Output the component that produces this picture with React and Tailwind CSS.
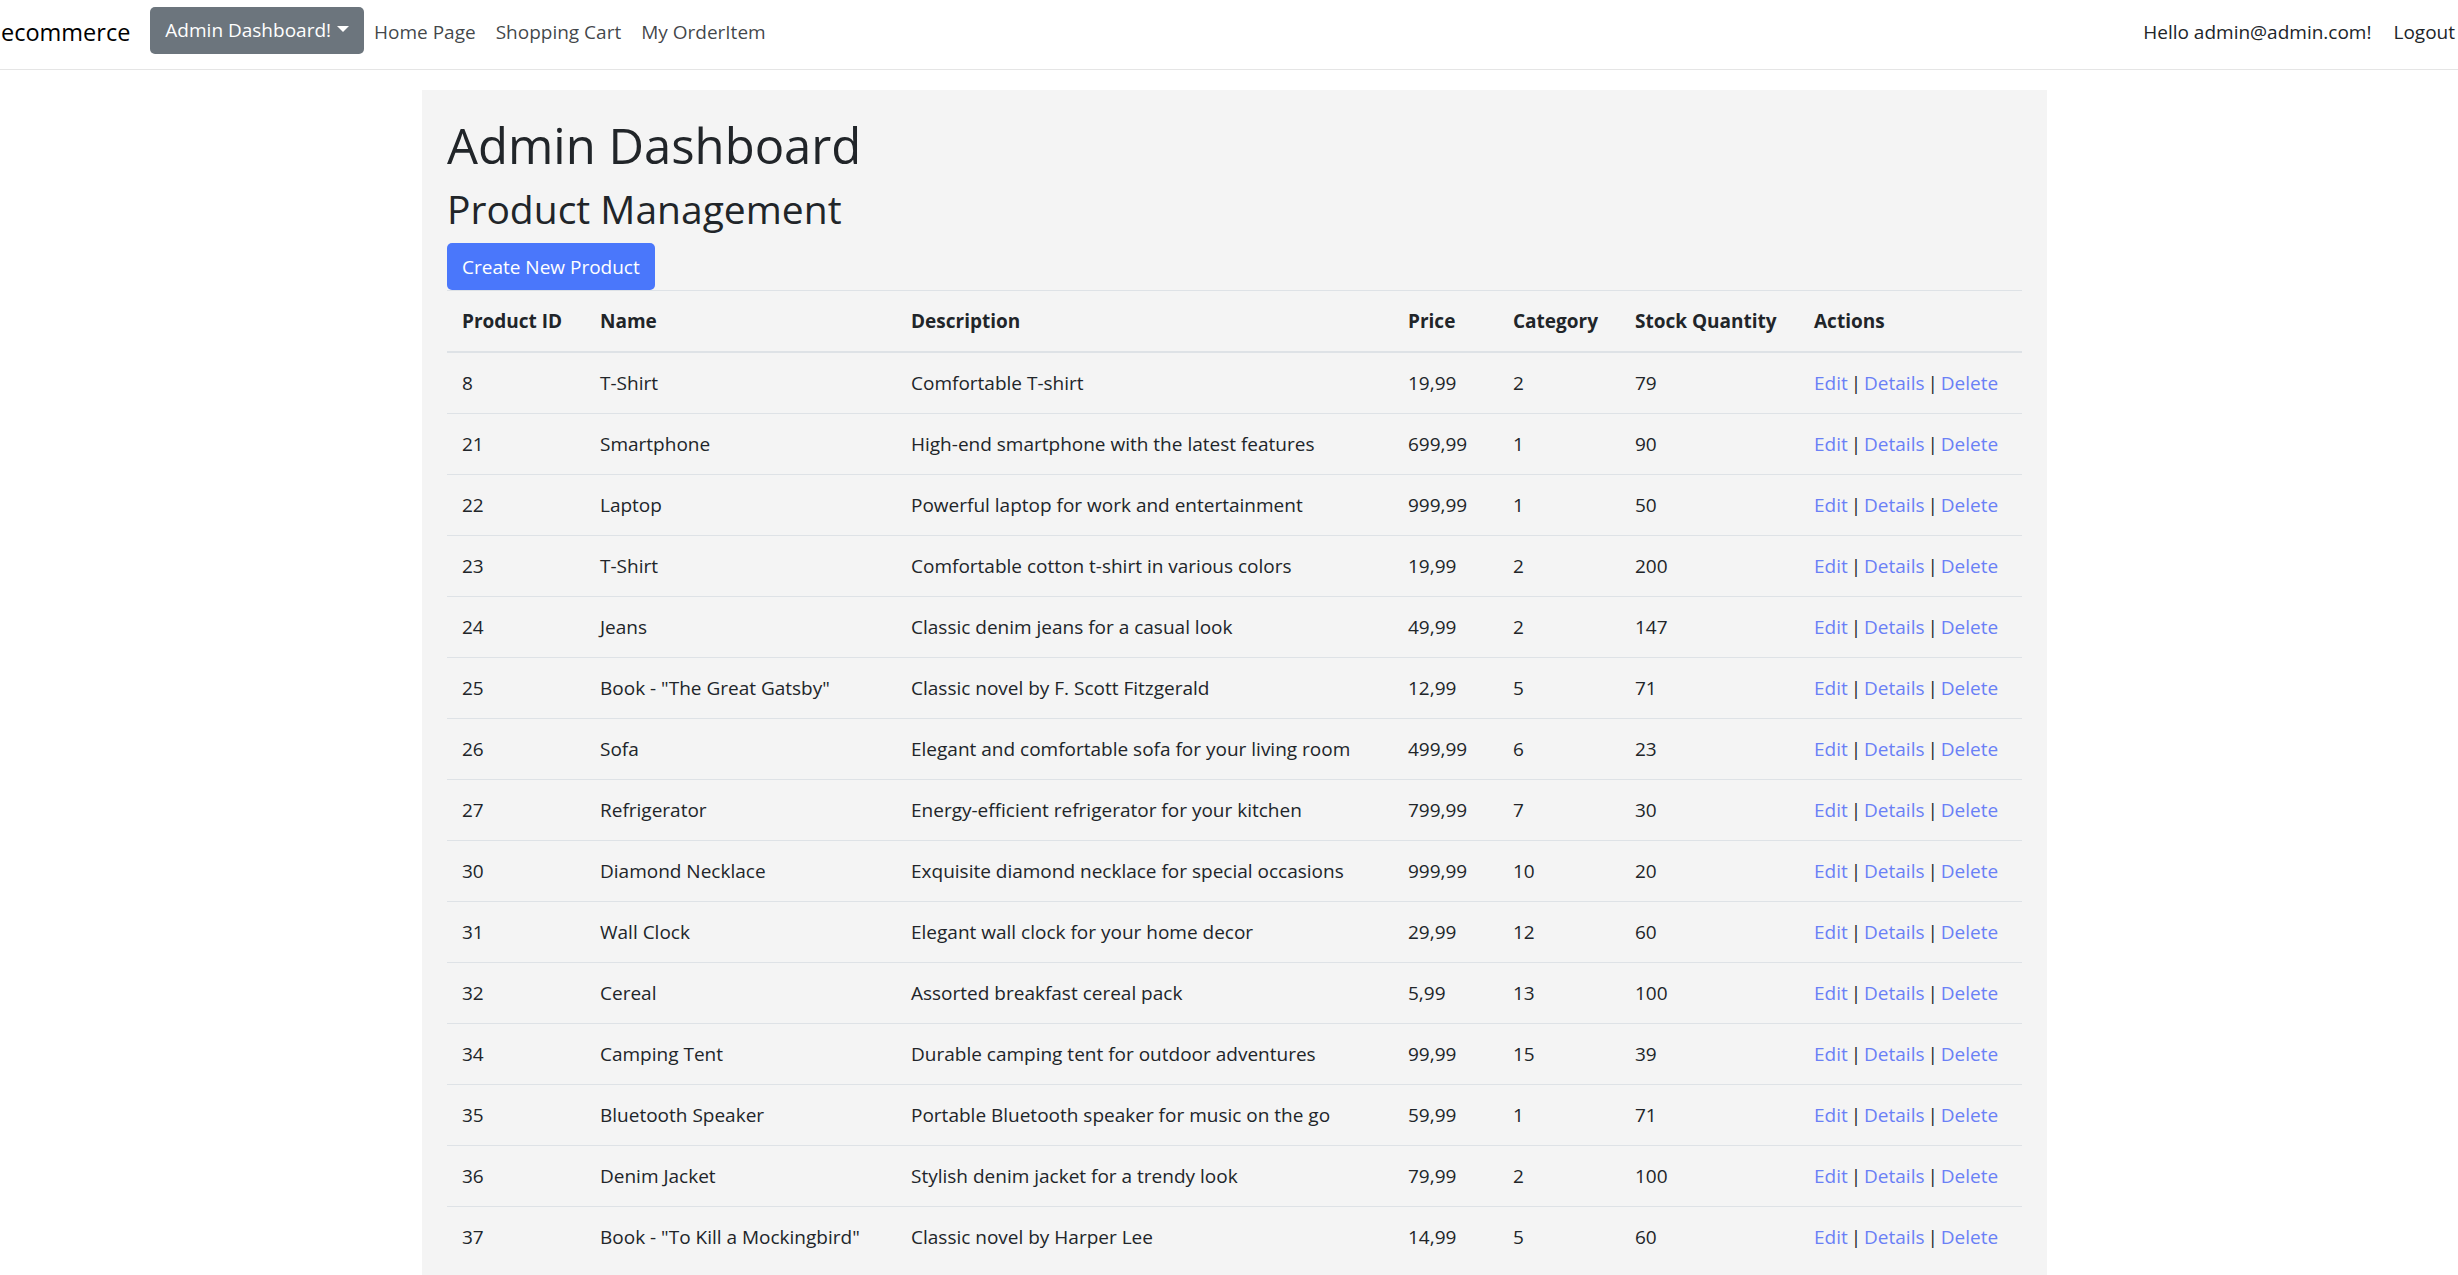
import React from 'react';

const products = [
  [8, 'T-Shirt', 'Comfortable T-shirt', '19,99', 2, 79],
  [21, 'Smartphone', 'High-end smartphone with the latest features', '699,99', 1, 90],
  [22, 'Laptop', 'Powerful laptop for work and entertainment', '999,99', 1, 50],
  [23, 'T-Shirt', 'Comfortable cotton t-shirt in various colors', '19,99', 2, 200],
  [24, 'Jeans', 'Classic denim jeans for a casual look', '49,99', 2, 147],
  [25, 'Book - "The Great Gatsby"', 'Classic novel by F. Scott Fitzgerald', '12,99', 5, 71],
  [26, 'Sofa', 'Elegant and comfortable sofa for your living room', '499,99', 6, 23],
  [27, 'Refrigerator', 'Energy-efficient refrigerator for your kitchen', '799,99', 7, 30],
  [30, 'Diamond Necklace', 'Exquisite diamond necklace for special occasions', '999,99', 10, 20],
  [31, 'Wall Clock', 'Elegant wall clock for your home decor', '29,99', 12, 60],
  [32, 'Cereal', 'Assorted breakfast cereal pack', '5,99', 13, 100],
  [34, 'Camping Tent', 'Durable camping tent for outdoor adventures', '99,99', 15, 39],
  [35, 'Bluetooth Speaker', 'Portable Bluetooth speaker for music on the go', '59,99', 1, 71],
  [36, 'Denim Jacket', 'Stylish denim jacket for a trendy look', '79,99', 2, 100],
  [37, 'Book - "To Kill a Mockingbird"', 'Classic novel by Harper Lee', '14,99', 5, 60],
];

const th = 'px-[15px] py-[15px] text-left font-bold whitespace-nowrap border-t border-b-2 border-t-[#dee2e6] border-b-[#dee2e6] align-bottom';
const td = 'px-[15px] py-[15px] whitespace-nowrap border-t border-[#dee2e6] align-top';

function Navbar() {
  return (
    <nav className="h-[70px] border-b border-[#e5e5e5] flex items-center pb-[5px] bg-white whitespace-nowrap">
      <a className="text-[23.5px] leading-[38px] pl-[1px] mr-[20px] text-black">ecommerce</a>
      <button className="h-[47px] px-[15px] rounded-[5px] bg-[#6c757d] text-white text-[19px] flex items-center gap-[6px] mt-[-3px]">
        Admin Dashboard!
        <span className="inline-block w-0 h-0 border-l-[6px] border-r-[6px] border-t-[6px] border-l-transparent border-r-transparent border-t-white mt-[-3px]" />
      </button>
      <div className="flex items-center text-[19px] text-[#212529]/85">
        <a className="px-[10px]">Home Page</a>
        <a className="px-[10px]">Shopping Cart</a>
        <a className="px-[10px]">My OrderItem</a>
      </div>
      <div className="ml-auto flex items-center text-[19px] text-[#212529]">
        <span className="px-[10px]">Hello admin@admin.com!</span>
        <a className="pl-[12px] pr-[3px]">Logout</a>
      </div>
    </nav>
  );
}

export default function App() {
  return (
    <div className="min-h-screen bg-white text-[#212529] font-['Segoe_UI','Open_Sans',sans-serif]">
      <Navbar />
      <main className="mt-[20px] mx-[422px] w-[1625px] bg-[#f4f4f4] px-[25px] pt-[25px] pb-[25px]">
        <h1 className="text-[49px] leading-[60px] font-medium mb-[10px]">Admin Dashboard</h1>
        <h2 className="text-[39px] leading-[48px] font-medium mb-[10px]">Product Management</h2>
        <button className="h-[47px] px-[15px] rounded-[5px] bg-[#4a77fb] text-white text-[19px] leading-[30px]">
          Create New Product
        </button>
        <table className="w-full text-[19px] leading-[30px]">
          <thead>
            <tr>
              <th className={`${th} w-[138px]`}>Product ID</th>
              <th className={`${th} w-[311px]`}>Name</th>
              <th className={`${th} w-[497px]`}>Description</th>
              <th className={`${th} w-[105px]`}>Price</th>
              <th className={`${th} w-[122px]`}>Category</th>
              <th className={`${th} w-[179px]`}>Stock Quantity</th>
              <th className={th}>Actions</th>
            </tr>
          </thead>
          <tbody>
            {products.map(p => (
              <tr key={p[0]}>
                <td className={td}>{p[0]}</td>
                <td className={td}>{p[1]}</td>
                <td className={td}>{p[2]}</td>
                <td className={td}>{p[3]}</td>
                <td className={td}>{p[4]}</td>
                <td className={td}>{p[5]}</td>
                <td className={`${td} [word-spacing:-2px]`}>
                  <a className="text-[#6a80f6]">Edit</a> | <a className="text-[#6a80f6]">Details</a> | <a className="text-[#6a80f6]">Delete</a>
                </td>
              </tr>
            ))}
          </tbody>
        </table>
      </main>
    </div>
  );
}
